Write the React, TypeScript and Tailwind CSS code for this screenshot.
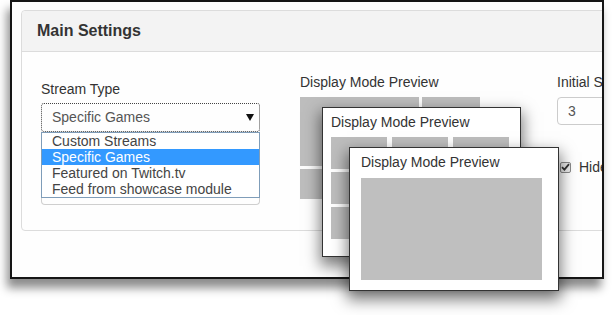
import React from 'react';

const streamTypes = ['Custom Streams', 'Specific Games', 'Featured on Twitch.tv', 'Feed from showcase module'];

const PreviewTile: React.FC<{ className?: string }> = ({ className = '' }) => (
  <div className={`bg-[#bdbdbd] ${className}`} />
);

export default function App() {
  return (
    <div className="relative w-[612px] h-[315px] overflow-hidden bg-white font-['Liberation_Sans',Arial,sans-serif] text-[#333]">
      {/* Screenshot frame */}
      <div className="relative ml-[10px] w-[594px] h-[279px] overflow-hidden border-2 border-[#161616] bg-[#fefefe] shadow-[-3px_9px_9px_rgba(0,0,0,0.45)]">
        <div className="ml-[9px] mt-[8px] w-[620px] rounded-[4px] border border-[#dcdcdc]">
          {/* Panel header */}
          <div className="flex h-[41px] items-center rounded-t-[4px] border-b border-[#dcdcdc] bg-[#f3f3f3] pl-[15px] text-[16px] font-bold text-[#333]">
            Main Settings
          </div>

          {/* Panel body */}
          <div className="flex h-[178px] pl-[19px] pt-[20px] text-[14px]">
            {/* Stream type */}
            <div className="mt-[7px] w-[219px] shrink-0">
              <div className="leading-[20px]">Stream Type</div>
              <div className="mt-[4px]">
                <div className="flex h-[29px] items-center justify-between rounded-[3px] border border-dotted border-[#444] pl-[10px] pr-[5px] text-[#555]">
                  <span>Specific Games</span>
                  <svg width="8" height="7" viewBox="0 0 8 7">
                    <polygon points="0,0 8,0 4,7" fill="#111" />
                  </svg>
                </div>
                <div className="border border-[#7f9db9] bg-white">
                  {streamTypes.map((t) => (
                    <div
                      key={t}
                      className={`h-[16px] pl-[10px] leading-[16px] ${
                        t === 'Specific Games' ? 'bg-[#3399ff] text-white' : 'text-[#444]'
                      }`}
                    >
                      {t}
                    </div>
                  ))}
                </div>
                <div className="h-[7px] rounded-b-[4px] border-x border-b border-[#cfcfcf]" />
              </div>
            </div>

            {/* Display mode preview */}
            <div className="ml-[40px] w-[242px] shrink-0">
              <div className="leading-[20px]">Display Mode Preview</div>
              <div className="mt-[5px] grid w-[180px] grid-cols-[58px_58px_58px] grid-rows-[33px_33px_30px] gap-[3px]">
                <PreviewTile className="col-span-2 row-span-2" />
                <PreviewTile />
                <PreviewTile />
                <PreviewTile />
                <PreviewTile />
                <PreviewTile />
              </div>
            </div>

            {/* Initial streams */}
            <div className="ml-[15px] w-[140px] shrink-0">
              <div className="whitespace-nowrap leading-[20px]">Initial Streams</div>
              <div className="mt-[5px] flex h-[28px] items-center rounded-[4px] border border-[#ccc] pl-[10px] text-[#555]">
                3
              </div>
              <div className="mt-[32px] flex h-[20px] items-center whitespace-nowrap">
                <span className="ml-[3px] flex h-[11px] w-[11px] items-center justify-center rounded-[2px] border border-[#8a8a8a] bg-[#ececec]">
                  <svg width="9" height="8" viewBox="0 0 9 8">
                    <path d="M1 4.2 L3.4 6.6 L8 1.2" fill="none" stroke="#333" strokeWidth="1.8" />
                  </svg>
                </span>
                <span className="ml-[8px]">Hide offline streams</span>
              </div>
            </div>
          </div>
        </div>

        {/* Next section, cut off by the frame */}
        <div className="ml-[10px] mt-[41px] whitespace-nowrap text-[21px] leading-[26px] text-[#333]">
          Appearance Settings
        </div>
      </div>

      {/* Second preview window */}
      <div className="absolute left-[322px] top-[107px] h-[150px] w-[199px] border border-[#333] bg-white pl-[8px] pt-[4px] text-[14px] shadow-[0_7px_14px_2px_rgba(0,0,0,0.5)]">
        <div className="leading-[20px]">Display Mode Preview</div>
        <div className="mt-[5px] grid w-[178px] grid-cols-[56px_56px_56px] grid-rows-[32px_32px_32px] gap-x-[5px] gap-y-[3px]">
          {Array.from({ length: 9 }).map((_, i) => (
            <PreviewTile key={i} />
          ))}
        </div>
      </div>

      {/* Front preview window */}
      <div className="absolute left-[349px] top-[147px] h-[144px] w-[210px] border border-[#333] bg-white pl-[11px] pt-[4px] text-[14px] shadow-[0_7px_14px_2px_rgba(0,0,0,0.5)]">
        <div className="leading-[20px]">Display Mode Preview</div>
        <div className="mt-[6px] h-[102px] w-[181px] bg-[#bfbfbf]" />
      </div>
    </div>
  );
}
